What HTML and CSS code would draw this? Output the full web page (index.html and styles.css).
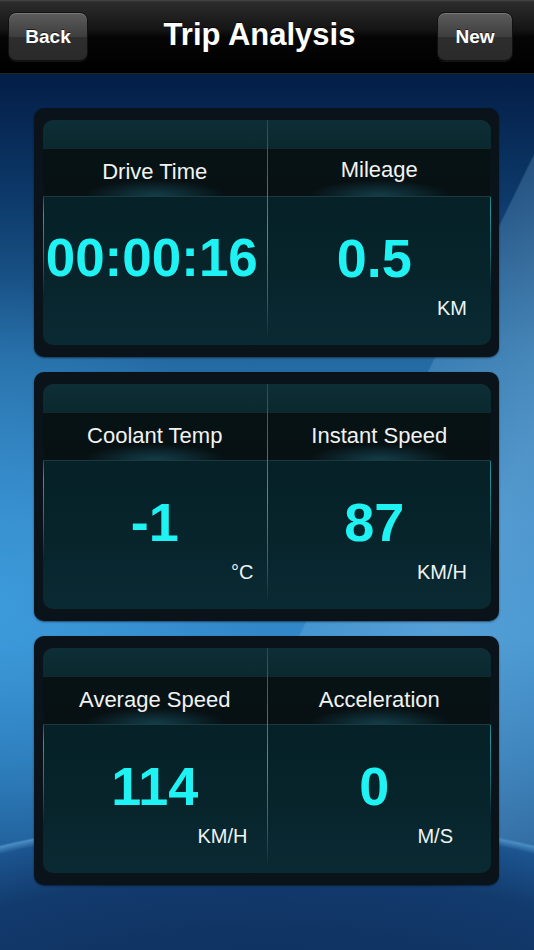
FILE: index.html
```html
<!DOCTYPE html>
<html>
<head>
    <meta charset="utf-8">
    <meta name="viewport" content="width=device-width, initial-scale=1">
    <title>Trip Analysis</title>
    <link rel="stylesheet" href="styles.css">
</head>
<body>
    <div class="screen">
        <header class="navbar">
            <button type="button" class="navbtn">Back</button>
            <h1 class="title">Trip Analysis</h1>
            <button type="button" class="navbtn">New</button>
        </header>

        <main class="cards">
            <section class="card">
                <div class="panel">
                    <div class="cell">
                        <div class="cell-top"></div>
                        <div class="cell-label">Drive Time</div>
                        <div class="cell-body">
                            <div class="value value-wide">00:00:16</div>
                            <div class="unit">&nbsp;</div>
                        </div>
                    </div>
                    <div class="divider"></div>
                    <div class="cell cell-r">
                        <div class="cell-top"></div>
                        <div class="cell-label label-up">Mileage</div>
                        <div class="cell-body">
                            <div class="value">0.5</div>
                            <div class="unit">KM</div>
                        </div>
                    </div>
                </div>
            </section>

            <section class="card">
                <div class="panel">
                    <div class="cell">
                        <div class="cell-top"></div>
                        <div class="cell-label">Coolant Temp</div>
                        <div class="cell-body">
                            <div class="value">-1</div>
                            <div class="unit unit-temp">°C</div>
                        </div>
                    </div>
                    <div class="divider"></div>
                    <div class="cell cell-r">
                        <div class="cell-top"></div>
                        <div class="cell-label">Instant Speed</div>
                        <div class="cell-body">
                            <div class="value">87</div>
                            <div class="unit">KM/H</div>
                        </div>
                    </div>
                </div>
            </section>

            <section class="card">
                <div class="panel">
                    <div class="cell">
                        <div class="cell-top"></div>
                        <div class="cell-label">Average Speed</div>
                        <div class="cell-body">
                            <div class="value">114</div>
                            <div class="unit unit-avg">KM/H</div>
                        </div>
                    </div>
                    <div class="divider"></div>
                    <div class="cell cell-r">
                        <div class="cell-top"></div>
                        <div class="cell-label">Acceleration</div>
                        <div class="cell-body">
                            <div class="value">0</div>
                            <div class="unit unit-acc">M/S</div>
                        </div>
                    </div>
                </div>
            </section>
        </main>
    </div>
</body>
</html>
```

FILE: styles.css
```css
*
{
    margin: 0;
    padding: 0;
    box-sizing: border-box;
}
body
{
    background: #0c2a55;
    font-family: "Liberation Sans", Arial, sans-serif;
}
.screen
{
    width: 534px;
    height: 950px;
    overflow: hidden;
    background:
        /* dark dome at the bottom */
        radial-gradient(600px 285px at 50% 1100px, #0b2750 0%, #123a6c 80%, #1c5590 97%, #4a8cc4 99.3%, rgba(60,130,190,0) 100%),
        /* light glass panel on the right */
        linear-gradient(116deg, rgba(140,200,240,0) 61%, rgba(140,200,240,.22) 61.2%, rgba(160,210,245,.32) 75%, rgba(140,200,240,.15) 100%),
        /* bright glow left middle */
        radial-gradient(260px 320px at 0 600px, rgba(70,170,235,.55), rgba(70,170,235,0)),
        linear-gradient(to bottom, #031a3e 0px, #041f48 80px, #0d3a6b 200px, #246aa2 360px, #2f80bf 520px, #3288c8 640px, #2670ad 760px, #1d5a94 840px, #0c2a55 950px);
}

/* top bar */
.navbar
{
    height: 74px;
    display: grid;
    grid-template-columns: 80px 1fr 76px;
    align-items: center;
    padding: 0 21px 0 8px;
    background: linear-gradient(to bottom, #4a4a4a 0px, #2c2c2c 2px, #141414 30px, #050505 37px, #000 72px);
    border-bottom: 1px solid #262626;
}
.navbtn
{
    height: 49px;
    border-radius: 8px;
    border: 1px solid #111;
    background: linear-gradient(to bottom, #5c5c5c 0%, #3e3e3e 50%, #2e2e2e 51%, #2a2a2a 100%);
    box-shadow: inset 0 1px 0 rgba(255,255,255,.18), 0 1px 0 rgba(255,255,255,.08);
    color: #fff;
    font-family: "Liberation Sans", Arial, sans-serif;
    font-size: 19px;
    font-weight: bold;
    text-shadow: 0 -1px 0 rgba(0,0,0,.6);
}
.title
{
    text-align: center;
    color: #fff;
    font-size: 31px;
    font-weight: bold;
    padding: 0 6px 4px 0;
    text-shadow: 0 -1px 0 rgba(0,0,0,.7);
}

/* cards */
.cards
{
    display: flex;
    flex-direction: column;
    gap: 15px;
    padding: 34px 0 0 34px;
    width: 499px;
}
.card
{
    height: 249px;
    padding: 12px 8px 12px 9px;
    background: #0a131a;
    border-radius: 10px;
    box-shadow: 0 1px 2px rgba(0,0,0,.5);
}
.panel
{
    height: 225px;
    display: grid;
    grid-template-columns: 1fr 1px 1fr;
    border-radius: 10px;
    overflow: hidden;
    background:
        linear-gradient(to bottom, rgba(40,200,210,0) 28%, rgba(40,200,210,.75) 42%, rgba(40,200,210,.5) 60%, rgba(40,200,210,0) 78%) left top / 1px 100% no-repeat,
        linear-gradient(to bottom, rgba(40,200,210,0) 15%, rgba(40,200,210,.7) 40%, rgba(40,200,210,.4) 60%, rgba(40,200,210,0) 75%) right top / 1px 100% no-repeat,
        linear-gradient(to bottom, rgba(14,48,55,.95) 0%, rgba(11,42,49,.95) 12%, rgba(6,34,41,.94) 36%, rgba(8,38,46,.93) 70%, rgba(11,45,53,.92) 100%);
}
.divider
{
    background: linear-gradient(to bottom, rgba(40,190,200,.25) 0%, rgba(40,190,200,.45) 15%, rgba(50,200,210,.75) 50%, rgba(40,190,200,.45) 80%, rgba(40,190,200,0) 97%);
}
.cell
{
    display: grid;
    grid-template-rows: 28px 49px 148px;
}
.cell-label
{
    background:
        radial-gradient(70px 16px at 50% 100%, rgba(30,100,120,.55), rgba(30,100,120,0)),
        rgba(8,16,18,.92);
    border-top: 1px solid #15272b;
    border-bottom: 1px solid #1b3a40;
    color: #f2f2f2;
    font-size: 22px;
    line-height: 46px;
    text-align: center;
}
.label-up
{
    line-height: 42px;
}
.cell-body
{
    padding-top: 34px;
    text-align: center;
}
.value
{
    color: #1ff2f2;
    font-size: 54px;
    font-weight: bold;
    line-height: 54px;
}
.value-wide
{
    font-size: 53px;
    padding-right: 6px;
}
.cell-r .value
{
    padding-right: 10px;
}
.unit
{
    margin-top: 13px;
    color: #eef4f4;
    font-size: 20px;
    line-height: 20px;
    text-align: right;
    padding-right: 24px;
}
.unit-temp
{
    padding-right: 13px;
}
.unit-avg
{
    padding-right: 19px;
}
.unit-acc
{
    padding-right: 38px;
}
```
